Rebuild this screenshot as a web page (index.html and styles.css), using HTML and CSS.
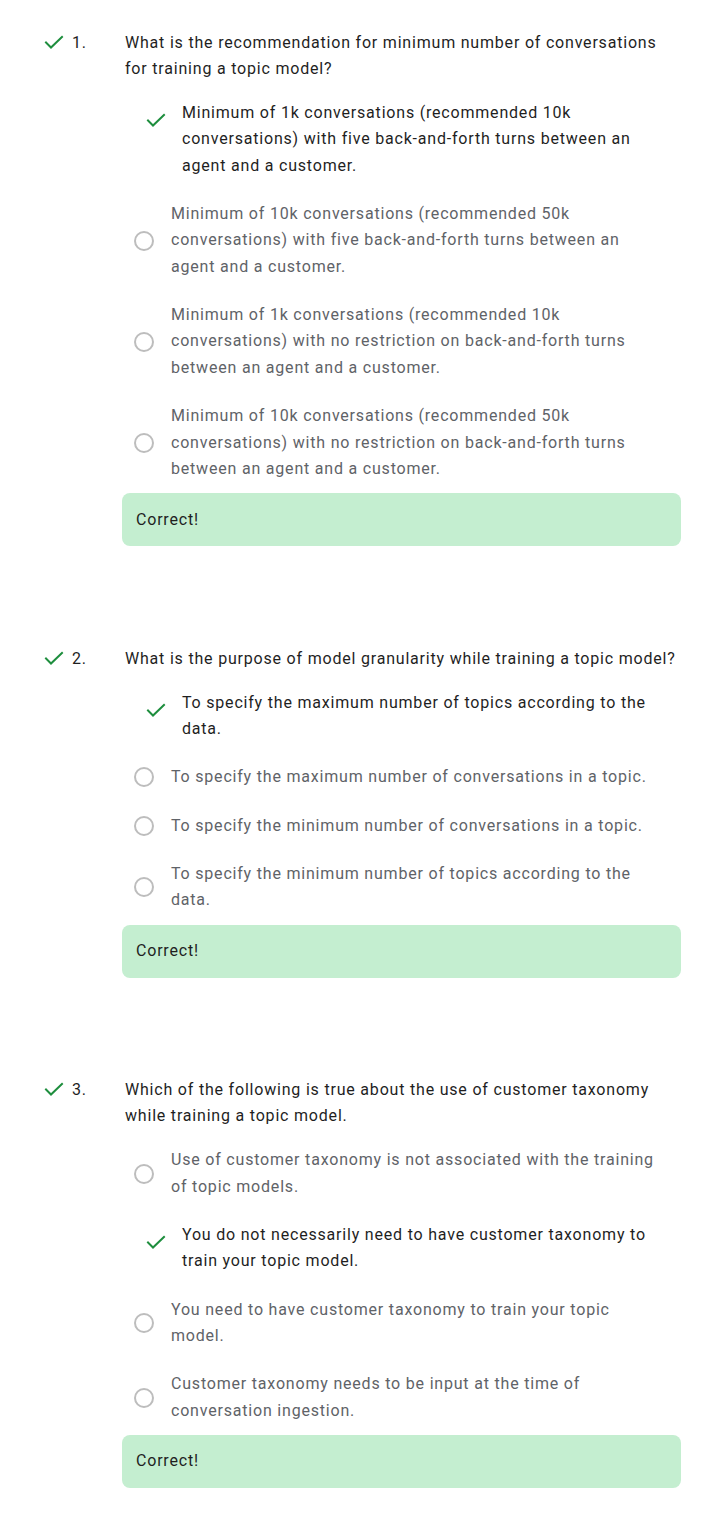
FILE: index.html
```html
<!DOCTYPE html>
<html lang="en">
<head>
<meta charset="utf-8">
<title>Quiz</title>
<link rel="stylesheet" href="styles.css">
</head>
<body>
<main class="quiz">

  <section class="question">
    <div class="q-head">
      <svg class="check" viewBox="0 0 24 24" width="24" height="24"><polyline points="4,12.5 9,17.5 20,7"/></svg>
      <span class="q-num">1.</span>
      <p class="q-text">What is the recommendation for minimum number of conversations for training a topic model?</p>
    </div>
    <ul class="options">
      <li class="option correct">
        <svg class="check" viewBox="0 0 24 24" width="24" height="24"><polyline points="4,12.5 9,17.5 20,7"/></svg>
        <span class="opt-text">Minimum of 1k conversations (recommended 10k conversations) with five back-and-forth turns between an agent and a customer.</span>
      </li>
      <li class="option">
        <span class="radio"></span>
        <span class="opt-text">Minimum of 10k conversations (recommended 50k conversations) with five back-and-forth turns between an agent and a customer.</span>
      </li>
      <li class="option">
        <span class="radio"></span>
        <span class="opt-text">Minimum of 1k conversations (recommended 10k conversations) with no restriction on back-and-forth turns between an agent and a customer.</span>
      </li>
      <li class="option">
        <span class="radio"></span>
        <span class="opt-text">Minimum of 10k conversations (recommended 50k conversations) with no restriction on back-and-forth turns between an agent and a customer.</span>
      </li>
    </ul>
    <div class="feedback">Correct!</div>
  </section>

  <section class="question">
    <div class="q-head">
      <svg class="check" viewBox="0 0 24 24" width="24" height="24"><polyline points="4,12.5 9,17.5 20,7"/></svg>
      <span class="q-num">2.</span>
      <p class="q-text">What is the purpose of model granularity while training a topic model?</p>
    </div>
    <ul class="options">
      <li class="option correct">
        <svg class="check" viewBox="0 0 24 24" width="24" height="24"><polyline points="4,12.5 9,17.5 20,7"/></svg>
        <span class="opt-text">To specify the maximum number of topics according to the data.</span>
      </li>
      <li class="option">
        <span class="radio"></span>
        <span class="opt-text">To specify the maximum number of conversations in a topic.</span>
      </li>
      <li class="option">
        <span class="radio"></span>
        <span class="opt-text">To specify the minimum number of conversations in a topic.</span>
      </li>
      <li class="option">
        <span class="radio"></span>
        <span class="opt-text">To specify the minimum number of topics according to the data.</span>
      </li>
    </ul>
    <div class="feedback">Correct!</div>
  </section>

  <section class="question">
    <div class="q-head">
      <svg class="check" viewBox="0 0 24 24" width="24" height="24"><polyline points="4,12.5 9,17.5 20,7"/></svg>
      <span class="q-num">3.</span>
      <p class="q-text">Which of the following is true about the use of customer taxonomy while training a topic model.</p>
    </div>
    <ul class="options">
      <li class="option">
        <span class="radio"></span>
        <span class="opt-text">Use of customer taxonomy is not associated with the training of topic models.</span>
      </li>
      <li class="option correct">
        <svg class="check" viewBox="0 0 24 24" width="24" height="24"><polyline points="4,12.5 9,17.5 20,7"/></svg>
        <span class="opt-text">You do not necessarily need to have customer taxonomy to train your topic model.</span>
      </li>
      <li class="option">
        <span class="radio"></span>
        <span class="opt-text">You need to have customer taxonomy to train your topic model.</span>
      </li>
      <li class="option">
        <span class="radio"></span>
        <span class="opt-text">Customer taxonomy needs to be input at the time of conversation ingestion.</span>
      </li>
    </ul>
    <div class="feedback">Correct!</div>
  </section>

</main>
</body>
</html>
```

FILE: styles.css
```css
html, body {
  margin: 0;
  padding: 0;
  background: #ffffff;
}

body {
  font-family: Roboto, "Noto Sans", Arial, sans-serif;
  font-size: 16px;
  line-height: 26.35px;
  letter-spacing: 0.8px;
  color: #1f1f1f;
}

.quiz {
  display: flex;
  flex-direction: column;
  gap: 99.5px;
  padding: 29.8px 0 40px 0;
}

.question {
  display: flex;
  flex-direction: column;
}

.check {
  flex: none;
  fill: none;
  stroke: #1e8e3e;
  stroke-width: 2;
  stroke-linecap: square;
}

.q-head {
  display: flex;
  align-items: flex-start;
  padding-left: 42px;
  width: 639px;
}

.q-num {
  flex: none;
  width: 53px;
  margin-left: 6px;
}

.q-text {
  margin: 0;
  flex: 1;
}

.options {
  list-style: none;
  margin: 6.6px 0 0 122px;
  padding: 0;
  width: 559px;
}

.option {
  display: flex;
  align-items: center;
  padding: 11px 20px 11px 12px;
  color: #5f6368;
}

.option.correct {
  align-items: flex-start;
  padding-left: 22px;
  color: #1f1f1f;
}

.option.correct .check {
  margin-top: 8px;
  margin-right: 14px;
}

.radio {
  flex: none;
  box-sizing: border-box;
  width: 20px;
  height: 20px;
  border: 2px solid #bdbdbd;
  border-radius: 50%;
  margin-right: 17px;
}

.opt-text {
  flex: 1;
}

.feedback {
  margin-left: 122px;
  width: 559px;
  box-sizing: border-box;
  padding: 13.3px 14px;
  background: #c4eed0;
  border-radius: 8px;
  color: #1f1f1f;
}
```
